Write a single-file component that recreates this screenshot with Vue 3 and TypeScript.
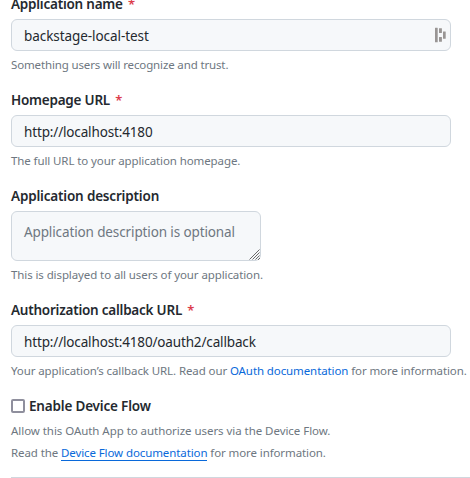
<script setup lang="ts">
import { ref } from 'vue'

const appName = ref('backstage-local-test')
const homepage = ref('http://localhost:4180')
const description = ref('')
const callback = ref('http://localhost:4180/oauth2/callback')
const deviceFlow = ref(false)
</script>

<template>
  <form class="form" @submit.prevent>
    <div class="group name">
      <label class="label" for="name">Application name <span class="req">*</span></label>
      <div class="field">
        <input id="name" v-model="appName" class="control" type="text" />
        <svg class="manager" width="12" height="16" viewBox="0 0 12 16" fill="#999594">
          <rect x="0" y="0.7" width="2.7" height="14.6" rx="0.3" />
          <rect x="4" y="1.3" width="2.9" height="4.7" rx="0.3" />
          <rect x="4" y="10" width="2.9" height="4.7" rx="0.3" />
          <rect x="8" y="4.4" width="2.7" height="7.3" rx="0.3" />
        </svg>
      </div>
      <p class="hint">Something users will recognize and trust.</p>
    </div>

    <div class="group home">
      <label class="label" for="home">Homepage URL <span class="req">*</span></label>
      <input id="home" v-model="homepage" class="control" type="text" />
      <p class="hint">The full URL to your application homepage.</p>
    </div>

    <div class="group description">
      <label class="label" for="desc">Application description</label>
      <div class="field area">
        <textarea id="desc" v-model="description" class="control" placeholder="Application description is optional"></textarea>
        <svg class="grip" width="11" height="11" viewBox="0 0 11 11" stroke="#6b6b6b" stroke-width="1" fill="none">
          <path d="M0.5 10.5 10.5 0.5M3.5 10.5 10.5 3.5M6.5 10.5 10.5 6.5M9 11 11 9" />
        </svg>
      </div>
      <p class="hint">This is displayed to all users of your application.</p>
    </div>

    <div class="group callback">
      <label class="label" for="cb">Authorization callback URL <span class="req">*</span></label>
      <input id="cb" v-model="callback" class="control" type="text" />
      <p class="hint">Your application’s callback URL. Read our <a class="link" href="#">OAuth documentation</a> for more information.</p>
    </div>

    <div class="group device">
      <label class="label check"><input v-model="deviceFlow" class="box" type="checkbox" />Enable Device Flow</label>
      <p class="hint">Allow this OAuth App to authorize users via the Device Flow.</p>
      <p class="hint second">Read the <a class="link underlined" href="#">Device Flow documentation</a> for more information.</p>
    </div>
    <hr class="rule" />
  </form>
</template>

<style>
html,
body {
  background: #fff;
  overflow: hidden;
}
</style>

<style scoped>
.form {
  padding-left: 11px;
  margin-top: -7px;
  font-family: "Noto Sans", sans-serif;
  color: #24292f;
  white-space: nowrap;
}
.group {
  margin-bottom: 15px;
}
.label {
  display: block;
  height: 21px;
  margin-bottom: 5px;
  font-size: 13.5px;
  line-height: 22px;
  font-weight: 600;
  letter-spacing: -0.23px;
}
.description .label,
.label.check {
  letter-spacing: -0.18px;
}
.req {
  color: #dc3c4b;
  font-size: 13px;
  margin-left: 2px;
}
.field {
  position: relative;
  width: 440px;
}
.field.area {
  width: 250px;
}
.control {
  display: block;
  box-sizing: border-box;
  width: 440px;
  height: 32px;
  margin: 0;
  padding: 6px 12px 4px;
  border: 1px solid #d0d7de;
  border-radius: 6px;
  outline: none;
  background: #f6f8fa;
  color: #24292f;
  font: 13.5px/20px "Noto Sans", sans-serif;
  letter-spacing: -0.15px;
}
.name .control {
  letter-spacing: -0.07px;
}
.area .control {
  width: 250px;
  height: 50px;
  padding: 10px 12px;
  resize: none;
  overflow: hidden;
  letter-spacing: -0.12px;
}
.control::placeholder {
  color: #6e7781;
  opacity: 1;
}
.manager {
  position: absolute;
  right: 4px;
  top: 8px;
}
.grip {
  position: absolute;
  right: 1px;
  bottom: 1px;
}
.hint {
  height: 18px;
  margin: 5px 0 0;
  font-size: 11.5px;
  line-height: 18px;
  letter-spacing: -0.1px;
  color: #6e7781;
}
.name .hint {
  letter-spacing: -0.14px;
}
.device .hint {
  margin-top: 6px;
  letter-spacing: -0.05px;
}
.device .hint.second {
  margin-top: 4px;
  letter-spacing: -0.1px;
}
.link {
  color: #0969da;
  text-decoration: none;
}
.underlined {
  display: inline-block;
  height: 16px;
  line-height: 18px;
  border-bottom: 1px solid #0969da;
}
.check {
  display: flex;
  align-items: center;
  gap: 4px;
}
.box {
  appearance: none;
  box-sizing: border-box;
  width: 14px;
  height: 14px;
  margin: 0;
  border: 2px solid #8f8f9d;
  border-radius: 2px;
  background: #fff;
}
.rule {
  height: 1px;
  margin: 0;
  border: 0;
  background: #d0d7de;
}
</style>
